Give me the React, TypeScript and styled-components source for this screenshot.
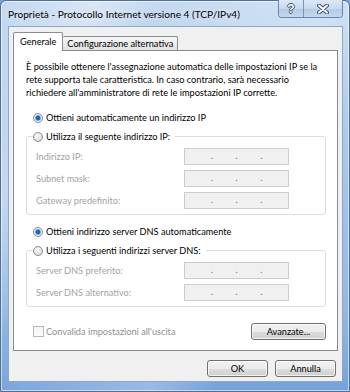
import React from 'react'
import styled, { createGlobalStyle } from 'styled-components'

const GlobalStyle = createGlobalStyle`
  html, body {
    margin: 0;
    padding: 0;
    background: #7aa3d4;
  }
  body {
    font-family: Lato, "Liberation Sans", sans-serif;
    font-size: 9.2px;
    color: #000;
  }
  * {
    box-sizing: border-box;
  }
`

type IpRow = { label: string }

const ipRows: IpRow[] = [
  { label: 'Indirizzo IP:' },
  { label: 'Subnet mask:' },
  { label: 'Gateway predefinito:' },
]

const dnsRows: IpRow[] = [
  { label: 'Server DNS preferito:' },
  { label: 'Server DNS alternativo:' },
]

const IpDots = () => (
  <IpField>
    <span>.</span>
    <span>.</span>
    <span>.</span>
  </IpField>
)

export default function App() {
  return (
    <>
      <GlobalStyle />
      <Window>
        <TitleBar>
          <Title>Proprietà - Protocollo Internet versione 4 (TCP/IPv4)</Title>
          <CaptionGroup>
            <CaptionButton width={24}>
              <HelpGlyph>?</HelpGlyph>
            </CaptionButton>
            <CaptionButton width={39}>
              <svg width="12" height="10" viewBox="0 0 12 10">
                <path d="M2 1.5 L10 8.5 M10 1.5 L2 8.5" stroke="#3d5068" strokeWidth="4" strokeLinecap="round" />
                <path d="M2 1.5 L10 8.5 M10 1.5 L2 8.5" stroke="#ffffff" strokeWidth="2" strokeLinecap="round" />
              </svg>
            </CaptionButton>
          </CaptionGroup>
        </TitleBar>

        <Client>
          <TabStrip>
            <Tab active>Generale</Tab>
            <Tab>Configurazione alternativa</Tab>
          </TabStrip>

          <Panel>
            <Intro>
              È possibile ottenere l'assegnazione automatica delle impostazioni IP se la
              <br />
              rete supporta tale caratteristica. In caso contrario, sarà necessario
              <br />
              richiedere all'amministratore di rete le impostazioni IP corrette.
            </Intro>

            <RadioRow first>
              <Radio checked />
              <span>Ottieni automaticamente un indirizzo IP</span>
            </RadioRow>

            <GroupBox>
              <Legend>
                <Radio />
                <span>Utilizza il seguente indirizzo IP:</span>
              </Legend>
              {ipRows.map((row) => (
                <FieldRow key={row.label}>
                  <FieldLabel>{row.label}</FieldLabel>
                  <IpDots />
                </FieldRow>
              ))}
            </GroupBox>

            <RadioRow>
              <Radio checked />
              <span>Ottieni indirizzo server DNS automaticamente</span>
            </RadioRow>

            <GroupBox>
              <Legend>
                <Radio />
                <span>Utilizza i seguenti indirizzi server DNS:</span>
              </Legend>
              {dnsRows.map((row) => (
                <FieldRow key={row.label}>
                  <FieldLabel>{row.label}</FieldLabel>
                  <IpDots />
                </FieldRow>
              ))}
            </GroupBox>

            <PanelFooter>
              <CheckRow>
                <Checkbox />
                <span>Convalida impostazioni all'uscita</span>
              </CheckRow>
              <Button width={75}>Avanzate...</Button>
            </PanelFooter>
          </Panel>

          <DialogButtons>
            <Button width={61}>OK</Button>
            <Button width={61}>Annulla</Button>
          </DialogButtons>
        </Client>
      </Window>
    </>
  )
}

const Window = styled.div`
  width: 350px;
  height: 392px;
  display: flex;
  flex-direction: column;
  padding: 0 6px 9px 7px;
  border: 1px solid #4f6f94;
  border-radius: 6px 6px 0 0;
  background:
    linear-gradient(115deg, rgba(255, 255, 255, 0) 0%, rgba(255, 255, 255, 0.35) 18%, rgba(255, 255, 255, 0) 30%, rgba(255, 255, 255, 0.25) 62%, rgba(255, 255, 255, 0) 75%),
    linear-gradient(180deg, #c4d9f1 0%, #adc9ea 35%, #94b8e3 80%, #76a2da 100%);
  box-shadow: inset 0 0 0 1px rgba(255, 255, 255, 0.55);
`

const TitleBar = styled.div`
  height: 25px;
  display: flex;
  align-items: flex-start;
  flex-shrink: 0;
`

const Title = styled.div`
  margin-top: 7px;
  font-size: 10.1px;
  color: #000;
  white-space: nowrap;
  text-shadow: 0 0 6px rgba(255, 255, 255, 0.9);
`

const CaptionGroup = styled.div`
  margin-left: auto;
  margin-top: -1px;
  display: flex;
  height: 18px;
  border: 1px solid #6a87ab;
  border-top: none;
  border-radius: 0 0 4px 4px;
  overflow: hidden;
  box-shadow: inset 0 0 0 1px rgba(255, 255, 255, 0.6);
`

const CaptionButton = styled.div<{ width: number }>`
  width: ${(p) => p.width}px;
  display: flex;
  align-items: center;
  justify-content: center;
  background: linear-gradient(180deg, #dbe8f6 0%, #c7daf0 50%, #b3cbe7 51%, #c3d7ee 100%);
  & + & {
    border-left: 1px solid #7b97ba;
  }
`

const HelpGlyph = styled.span`
  font-family: "Liberation Sans", sans-serif;
  font-weight: bold;
  font-size: 12px;
  color: #fff;
  text-shadow: 1px 0 0 #3d5068, -1px 0 0 #3d5068, 0 1px 0 #3d5068, 0 -1px 0 #3d5068;
`

const Client = styled.div`
  flex: 1;
  display: flex;
  flex-direction: column;
  padding: 5px 4px 4px 4px;
  background: #f0f0f0;
  border: 1px solid #8ea7c4;
`

const TabStrip = styled.div`
  display: flex;
  align-items: flex-end;
  height: 18px;
  flex-shrink: 0;
`

const Tab = styled.div<{ active?: boolean }>`
  position: relative;
  z-index: ${(p) => (p.active ? 2 : 1)};
  height: ${(p) => (p.active ? 19 : 14)}px;
  margin-bottom: ${(p) => (p.active ? -1 : 0)}px;
  padding: ${(p) => (p.active ? '3px 6px 0 6px' : '0 4px 1px 4px')};
  display: flex;
  align-items: ${(p) => (p.active ? 'flex-start' : 'center')};
  border: 1px solid #898c95;
  border-bottom: none;
  border-left: ${(p) => (p.active ? '1px solid #898c95' : 'none')};
  border-radius: 2px 2px 0 0;
  background: ${(p) => (p.active ? '#ffffff' : 'linear-gradient(180deg, #f7f7f7 0%, #ececec 50%, #e1e1e1 100%)')};
  white-space: nowrap;
`

const Panel = styled.div`
  flex: 1;
  display: flex;
  flex-direction: column;
  background: #fff;
  border: 1px solid #898c95;
  padding: 9px 11px 0 12px;
`

const Intro = styled.p`
  margin: 0;
  line-height: 13px;
  white-space: nowrap;
`

const RadioRow = styled.div<{ first?: boolean }>`
  display: flex;
  align-items: center;
  gap: 3px;
  height: 13px;
  margin: ${(p) => (p.first ? 12 : 10)}px 0 0 7px;
  white-space: nowrap;
`

const Radio = styled.span<{ checked?: boolean }>`
  width: 10px;
  height: 10px;
  flex-shrink: 0;
  border-radius: 50%;
  border: 1px solid #8a8d92;
  background: ${(p) =>
    p.checked
      ? 'radial-gradient(circle at 50% 50%, #2a73c9 0, #1b5aa5 1.8px, #7fb4e6 2.6px, #dbeaf8 3.4px, #f4f4f4 100%)'
      : 'radial-gradient(circle at 40% 35%, #fdfdfd 0, #e8e8e8 3px, #d6d6d6 100%)'};
`

const GroupBox = styled.fieldset`
  margin: 6px 0 0 0;
  padding: 5px 9px 5px 9px;
  border: 1px solid #d5dfe5;
  border-radius: 3px;
  display: flex;
  flex-direction: column;
  gap: 5px;
`

const Legend = styled.legend`
  display: flex;
  align-items: center;
  gap: 3px;
  height: 13px;
  padding: 0 5px 0 0;
  margin-left: -3px;
  white-space: nowrap;
`

const FieldRow = styled.div`
  display: flex;
  align-items: center;
  height: 17px;
`

const FieldLabel = styled.span`
  width: 148px;
  color: #a3a3a3;
  white-space: nowrap;
`

const IpField = styled.div`
  width: 105px;
  height: 17px;
  display: flex;
  align-items: center;
  justify-content: space-evenly;
  padding: 0 3px 3px 3px;
  background: #f0f0f0;
  border: 1px solid #cdcdcd;
  color: #6d6d6d;
  font-size: 9px;
`

const PanelFooter = styled.div`
  display: flex;
  align-items: center;
  justify-content: space-between;
  margin-top: 16px;
`

const CheckRow = styled.div`
  display: flex;
  align-items: center;
  gap: 2px;
  margin-left: 7px;
  color: #8f8f8f;
  white-space: nowrap;
`

const Checkbox = styled.span`
  width: 11px;
  height: 11px;
  border: 1px solid #b9b9b9;
  background: linear-gradient(180deg, #f4f4f4, #fbfbfb);
`

const Button = styled.div<{ width: number }>`
  width: ${(p) => p.width}px;
  height: 17px;
  display: flex;
  align-items: center;
  justify-content: center;
  border: 1px solid #707070;
  border-radius: 3px;
  background: linear-gradient(180deg, #f2f2f2 0%, #ebebeb 50%, #dddddd 51%, #cfcfcf 100%);
  box-shadow: inset 0 0 0 1px rgba(255, 255, 255, 0.7);
  white-space: nowrap;
`

const DialogButtons = styled.div`
  display: flex;
  justify-content: flex-end;
  gap: 7px;
  margin-top: 9px;
  padding-right: 2px;
  flex-shrink: 0;
`
